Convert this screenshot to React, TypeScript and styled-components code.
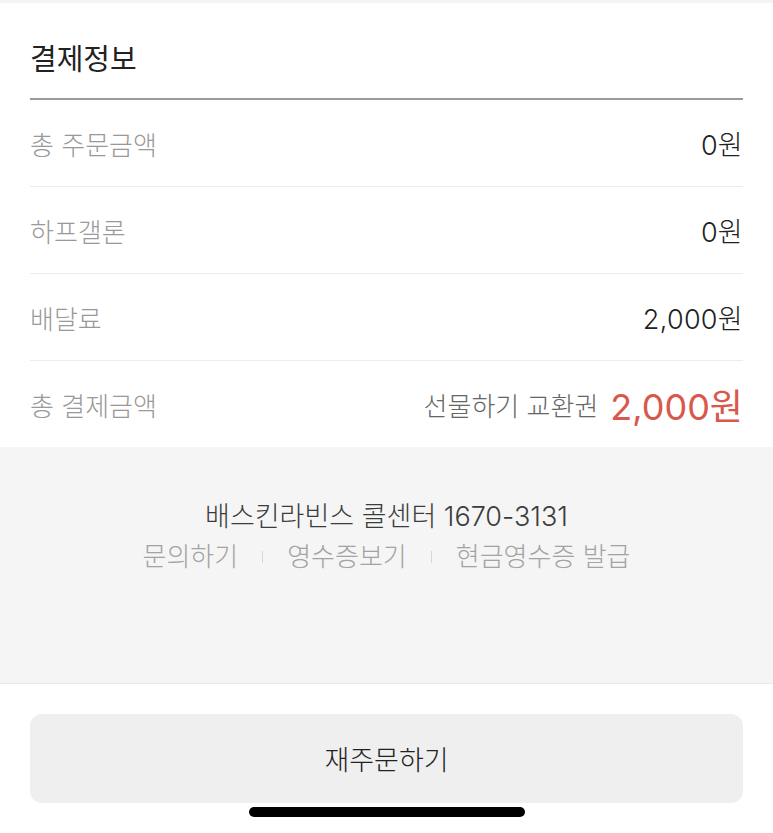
import React from "react";
import styled, { createGlobalStyle } from "styled-components";

const Global = createGlobalStyle`
  html, body { margin: 0; padding: 0; background: #fff; }
  body { font-family: Inter, "Noto Sans CJK KR", "Noto Sans", sans-serif; -webkit-font-smoothing: antialiased; }
  * { box-sizing: border-box; }
`;

const Page = styled.div`
  width: 773px;
  min-height: 833px;
  display: flex;
  flex-direction: column;
`;

const TopStrip = styled.div`
  height: 3px;
  background: #f4f4f4;
`;

const Section = styled.section`
  padding: 0 30px;
`;

const Title = styled.h2`
  margin: 0;
  padding: 39px 0 20px;
  line-height: 36px;
  font-size: 29px;
  font-weight: 400;
  letter-spacing: 0;
  color: #222;
  border-bottom: 2px solid #9a9a9a;
`;

const Row = styled.div<{ $last?: boolean }>`
  height: ${(p) => (p.$last ? 86 : 87)}px;
  display: flex;
  align-items: center;
  justify-content: space-between;
  border-bottom: ${(p) => (p.$last ? "none" : "1px solid #ececec")};
`;

const Label = styled.span`
  font-size: 26px;
  font-weight: 300;
  color: #999;
`;

const Value = styled.span`
  font-size: 27px;
  font-weight: 300;
  letter-spacing: 0.3px;
  color: #222;
`;

const TotalWrap = styled.div`
  display: flex;
  align-items: center;
  gap: 12px;
`;

const Note = styled.span`
  font-size: 26px;
  font-weight: 300;
  color: #666;
`;

const Total = styled.span`
  font-size: 36px;
  font-weight: 400;
  color: #d9584c;
`;

const InfoBox = styled.div`
  height: 237px;
  background: #f5f5f5;
  border-bottom: 1px solid #ebebeb;
  padding-top: 52px;
  display: flex;
  flex-direction: column;
  align-items: center;
  gap: 4px;
`;

const CallCenter = styled.div`
  font-size: 27px;
  font-weight: 300;
  line-height: 36px;
  color: #3c3c3c;
`;

const Links = styled.div`
  display: flex;
  align-items: center;
  gap: 24px;
  line-height: 36px;
`;

const LinkText = styled.span`
  font-size: 26px;
  font-weight: 300;
  color: #a3a3a3;
`;

const Sep = styled.span`
  width: 1px;
  height: 12px;
  background: #d6d6d6;
`;

const Footer = styled.div`
  padding: 30px 30px 0;
  display: flex;
  flex-direction: column;
  align-items: center;
`;

const ReorderButton = styled.button`
  width: 100%;
  height: 89px;
  border: none;
  border-radius: 12px;
  background: #efefef;
  font-family: inherit;
  font-size: 27px;
  font-weight: 300;
  color: #222;
`;

const HomeBar = styled.div`
  margin-top: 4px;
  width: 276px;
  height: 10px;
  border-radius: 5px;
  background: #000;
`;

export default function App() {
  return (
    <Page>
      <Global />
      <TopStrip />
      <Section>
        <Title>결제정보</Title>
        <Row>
          <Label>총 주문금액</Label>
          <Value>0원</Value>
        </Row>
        <Row>
          <Label>하프갤론</Label>
          <Value>0원</Value>
        </Row>
        <Row>
          <Label>배달료</Label>
          <Value>2,000원</Value>
        </Row>
        <Row $last>
          <Label>총 결제금액</Label>
          <TotalWrap>
            <Note>선물하기 교환권</Note>
            <Total>2,000원</Total>
          </TotalWrap>
        </Row>
      </Section>
      <InfoBox>
        <CallCenter>배스킨라빈스 콜센터 1670-3131</CallCenter>
        <Links>
          <LinkText>문의하기</LinkText>
          <Sep />
          <LinkText>영수증보기</LinkText>
          <Sep />
          <LinkText>현금영수증 발급</LinkText>
        </Links>
      </InfoBox>
      <Footer>
        <ReorderButton>재주문하기</ReorderButton>
        <HomeBar />
      </Footer>
    </Page>
  );
}
